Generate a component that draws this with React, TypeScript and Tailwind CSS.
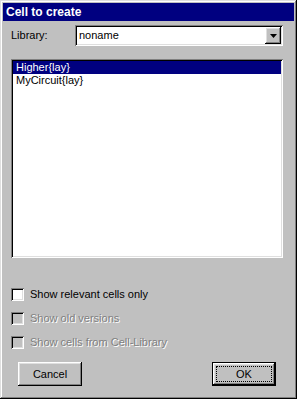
import React from 'react';

const raised =
  'shadow-[inset_-1px_-1px_#000,inset_1px_1px_#fff,inset_-2px_-2px_#808080,inset_2px_2px_#dfdfdf]';
const sunken =
  'shadow-[inset_1px_1px_#808080,inset_-1px_-1px_#fff,inset_2px_2px_#000,inset_-2px_-2px_#dfdfdf]';

function Check({ label, disabled }: { label: string; disabled?: boolean }) {
  return (
    <div className="flex items-center h-[13px]">
      <div className={`w-[13px] h-[13px] ${sunken} ${disabled ? 'bg-[#c0c0c0]' : 'bg-white'}`} />
      <span
        className={`ml-[6px] leading-[13px] ${
          disabled ? 'text-[#808080] [text-shadow:1px_1px_#fff]' : 'text-black'
        }`}
      >
        {label}
      </span>
    </div>
  );
}

export default function App() {
  const cells = ['Higher{lay}', 'MyCircuit{lay}'];

  return (
    <div
      className="w-[297px] h-[399px] bg-[#c0c0c0] p-[3px] flex flex-col text-[11px] shadow-[inset_-1px_-1px_#000,inset_1px_1px_#dfdfdf,inset_-2px_-2px_#808080,inset_2px_2px_#fff]"
      style={{ fontFamily: '"Liberation Sans", Arial, sans-serif' }}
    >
      {/* Title bar */}
      <div className="h-[18px] bg-[#000080] text-white font-bold text-[12px] px-[3px] flex items-center">
        Cell to create
      </div>

      <div className="flex flex-col px-[8px]">
        {/* Library */}
        <div className="flex items-center mt-[4px] h-[21px]">
          <span className="w-[64px] text-black">Library:</span>
          <div className={`w-[208px] h-[21px] bg-white ${sunken} p-[2px] flex`}>
            <span className="flex-1 pl-[2px] leading-[17px] text-black">noname</span>
            <div className={`w-[16px] h-[17px] bg-[#c0c0c0] ${raised} flex items-center justify-center`}>
              <svg width="7" height="4" viewBox="0 0 7 4">
                <path d="M0 0h7L3.5 4z" fill="#000" />
              </svg>
            </div>
          </div>
        </div>

        {/* Cell list */}
        <div className={`mt-[13px] w-[272px] h-[199px] bg-white ${sunken} p-[2px]`}>
          {cells.map((c, i) => (
            <div
              key={c}
              className={`h-[13px] leading-[13px] pl-[3px] ${
                i === 0 ? 'bg-[#000080] text-white' : 'text-black'
              }`}
            >
              {c}
            </div>
          ))}
        </div>

        {/* Options */}
        <div className="mt-[30px] flex flex-col gap-[11px]">
          <Check label="Show relevant cells only" />
          <Check label="Show old versions" disabled />
          <Check label="Show cells from Cell-Library" disabled />
        </div>

        {/* Buttons */}
        <div className="mt-[13px] flex justify-between pl-[7px] pr-[10px]">
          <button className={`w-[64px] h-[24px] bg-[#c0c0c0] ${raised} text-black text-[11px] font-normal`}>
            Cancel
          </button>
          <button className="w-[64px] h-[24px] border border-black bg-[#c0c0c0] p-0">
            <div className={`w-full h-full ${raised} p-[3px] flex`}>
              <div className="flex-1 border border-dotted border-black flex items-center justify-center text-black text-[11px]">
                OK
              </div>
            </div>
          </button>
        </div>
      </div>
    </div>
  );
}
